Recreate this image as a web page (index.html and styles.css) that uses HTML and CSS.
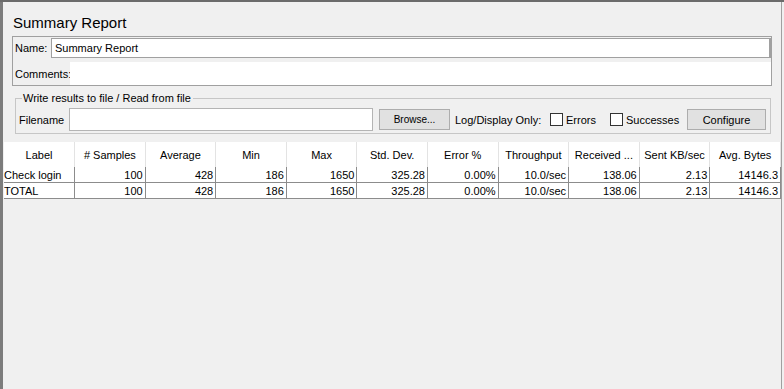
FILE: index.html
```html
<!DOCTYPE html>
<html lang="en">
<head>
    <meta charset="UTF-8">
    <meta name="viewport" content="width=device-width, initial-scale=1.0">
    <title>Summary Report</title>
    <link rel="stylesheet" href="styles.css">
</head>
<body>
    <div class="window">
        <div class="title">Summary Report</div>

        <div class="info-box">
            <div class="info-row name-row">
                <label class="info-label" for="name">Name:</label>
                <input type="text" id="name" class="name-input" value="Summary Report">
            </div>
            <div class="info-row comments-row">
                <label class="info-label" for="comments">Comments:</label>
                <div class="comments-area" id="comments"></div>
            </div>
        </div>

        <fieldset class="file-group">
            <legend>Write results to file / Read from file</legend>
            <div class="file-row">
                <span class="file-label">Filename</span>
                <input type="text" class="file-input">
                <button class="btn browse-btn">Browse...</button>
                <span class="log-label">Log/Display Only:</span>
                <span class="check"></span>
                <span class="check-label errors-label">Errors</span>
                <span class="check"></span>
                <span class="check-label successes-label">Successes</span>
                <button class="btn configure-btn">Configure</button>
            </div>
        </fieldset>

        <table class="report">
            <thead>
                <tr>
                    <th>Label</th>
                    <th># Samples</th>
                    <th>Average</th>
                    <th>Min</th>
                    <th>Max</th>
                    <th>Std. Dev.</th>
                    <th>Error %</th>
                    <th>Throughput</th>
                    <th>Received ...</th>
                    <th>Sent KB/sec</th>
                    <th>Avg. Bytes</th>
                </tr>
            </thead>
            <tbody>
                <tr>
                    <td class="label-cell">Check login</td>
                    <td>100</td>
                    <td>428</td>
                    <td>186</td>
                    <td>1650</td>
                    <td>325.28</td>
                    <td>0.00%</td>
                    <td>10.0/sec</td>
                    <td>138.06</td>
                    <td>2.13</td>
                    <td>14146.3</td>
                </tr>
                <tr>
                    <td class="label-cell">TOTAL</td>
                    <td>100</td>
                    <td>428</td>
                    <td>186</td>
                    <td>1650</td>
                    <td>325.28</td>
                    <td>0.00%</td>
                    <td>10.0/sec</td>
                    <td>138.06</td>
                    <td>2.13</td>
                    <td>14146.3</td>
                </tr>
            </tbody>
        </table>
    </div>
</body>
</html>
```

FILE: styles.css
```css
html, body {
    margin: 0;
    padding: 0;
}
body {
    width: 784px;
    height: 389px;
    overflow: hidden;
    background-color: #f0f0f0;
    border-top: 2px solid #6b6b6b;
    box-sizing: border-box;
    font-family: "Liberation Sans", Arial, sans-serif;
    font-size: 11px;
    color: #000;
}
.window {
    width: 782px;
    height: 387px;
    box-sizing: border-box;
    border-left: 3px solid #7c7c7c;
    border-right: 1px solid #a0a0a0;
    background-color: #f0f0f0;
    display: flex;
    flex-direction: column;
}
.title {
    font-size: 15px;
    line-height: 20px;
    padding: 11px 0 3px 10px;
}
.info-box {
    margin-left: 9px;
    width: 760px;
    box-sizing: border-box;
    border: 1px solid #a0a0a0;
    padding-top: 1px;
    display: flex;
    flex-direction: column;
    gap: 4px;
}
.info-row {
    display: flex;
    align-items: center;
}
.info-label {
    padding-left: 2px;
}
.name-row {
    height: 20px;
}
.name-row .info-label {
    width: 36px;
}
.name-input {
    flex: 1;
    height: 20px;
    box-sizing: border-box;
    margin: 0;
    border: 1px solid #a0a0a0;
    border-right-width: 2px;
    padding: 0 3px;
    font-family: inherit;
    font-size: 11px;
    outline: none;
}
.comments-row {
    height: 23px;
}
.comments-row .info-label {
    width: 55px;
}
.comments-area {
    flex: 1;
    height: 23px;
    background-color: #fff;
}
.file-group {
    margin: 6px 10px 0 12px;
    padding: 3px 4px 2px 3px;
    border: 1px solid #c6c6c6;
}
.file-group legend {
    padding: 0 2px 0 1px;
    margin-left: 3px;
    line-height: 13px;
}
.file-row {
    display: flex;
    align-items: center;
    height: 23px;
}
.file-label {
    width: 50px;
}
.file-input {
    width: 304px;
    height: 23px;
    box-sizing: border-box;
    margin: 0;
    border: 1px solid #b4b4b4;
    background-color: #fff;
    outline: none;
}
.btn {
    height: 21px;
    box-sizing: border-box;
    margin: 0;
    padding: 0;
    background-color: #e1e1e1;
    border: 1px solid #adadad;
    font-family: inherit;
    font-size: 11px;
    color: #000;
}
.browse-btn {
    width: 71px;
    margin-left: 6px;
    font-size: 10px;
}
.log-label {
    width: 95px;
    margin-left: 5px;
}
.check {
    width: 13px;
    height: 13px;
    box-sizing: border-box;
    border: 1px solid #333;
    background-color: #fff;
    margin-right: 3px;
}
.errors-label {
    width: 44px;
}
.successes-label {
    width: 61px;
}
.configure-btn {
    width: 79px;
}
.report {
    margin: 8px 0 0 1px;
    width: 777px;
    table-layout: fixed;
    border-collapse: collapse;
    font-size: 11px;
}
.report th {
    height: 25px;
    padding: 0;
    font-weight: normal;
    text-align: center;
    background-color: #fff;
    border-right: 1px solid #e3e3e3;
}
.report td {
    height: 15px;
    padding: 0 2px 0 1px;
    text-align: right;
    background-color: #fff;
    border-right: 1px solid #8c8c8c;
    border-bottom: 1px solid #8c8c8c;
    white-space: nowrap;
    overflow: hidden;
}
.report td.label-cell {
    text-align: left;
    padding-left: 0;
}
```
